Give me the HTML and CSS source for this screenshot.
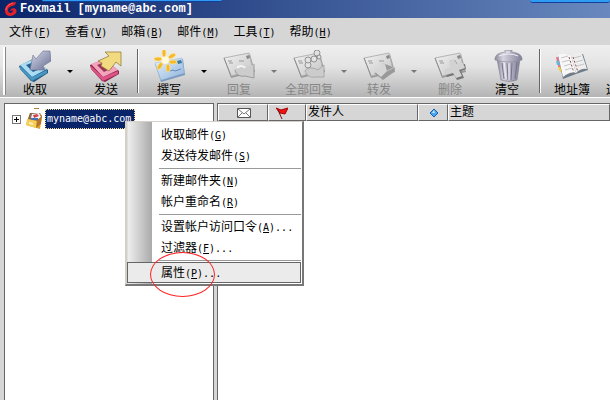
FILE: index.html
```html
<!DOCTYPE html>
<html lang="zh-CN">
<head>
    <meta charset="UTF-8">
    <meta name="viewport" content="width=device-width, initial-scale=1.0">
    <title>Foxmail</title>
    <link rel="stylesheet" href="styles.css">
</head>
<body>
    <!-- 图标定义 -->
    <svg class="defs" aria-hidden="true">
        <defs>
            <linearGradient id="silver" x1="0" y1="0" x2="1" y2="1">
                <stop offset="0" stop-color="#d8dcec"/><stop offset="1" stop-color="#676d91"/>
            </linearGradient>
            <linearGradient id="can" x1="0" y1="0" x2="1" y2="0">
                <stop offset="0" stop-color="#8c8a9c"/><stop offset=".3" stop-color="#d5d3df"/><stop offset="1" stop-color="#817f96"/>
            </linearGradient>
            <linearGradient id="paper" x1="0" y1="0" x2="1" y2="1">
                <stop offset="0" stop-color="#f2f2f2"/><stop offset="1" stop-color="#c4c4c4"/>
            </linearGradient>
            <linearGradient id="card" x1="0" y1="0" x2="1" y2="1">
                <stop offset="0" stop-color="#e8f4fc"/><stop offset="1" stop-color="#8fb2dc"/>
            </linearGradient>
            <symbol id="letter" viewBox="0 0 32 32">
                <path d="M2 9L27 4L32 22L8 28Z" fill="#999"/>
                <path d="M1 8L26 3L30 20L8 26Z" fill="url(#paper)" stroke="#b4b4b4"/>
                <path d="M1 8L8 26" stroke="#8e8e8e"/>
                <path d="M5 11h4M6 13h4M16 11h5" stroke="#999"/>
                <path d="M23 6l3-1l1 3l-3 1z" fill="#888"/>
            </symbol>
        </defs>
    </svg>

    <header class="titlebar">
        <svg class="logo" viewBox="0 0 14 16">
            <path d="M12 1C5 1 0 5 1 11C2 16 9 16 12 12C14 8 10 6 7 8L6 10L9 9C9 13 4 13 4 9C4 6 8 5 11 4Z" fill="#e3202a"/>
            <path d="M9 2C5 3 2 6 2 9" fill="none" stroke="#ff6660"/>
        </svg>
        <h1>Foxmail [myname@abc.com]</h1>
        <span class="tab tab-left"></span>
        <span class="tab tab-right"></span>
    </header>

    <nav class="menubar">
        <button>文件<span class="key">(<u>F</u>)</span></button>
        <button>查看<span class="key">(<u>V</u>)</span></button>
        <button>邮箱<span class="key">(<u>B</u>)</span></button>
        <button>邮件<span class="key">(<u>M</u>)</span></button>
        <button>工具<span class="key">(<u>T</u>)</span></button>
        <button>帮助<span class="key">(<u>H</u>)</span></button>
    </nav>

    <div class="toolbar">
        <span class="grip"></span>
        <button class="tool">
            <svg viewBox="0 0 32 32">
                <path d="M0 16L14 9L29 20L29 23L15 32L12 31L1 19Z" fill="#245780"/>
                <path d="M1 15L15 9L28 19L13 27Z" fill="#a7dcf4"/>
                <path d="M1 16L13 27L28 20L28 23L13 31L1 19Z" fill="#4795c1"/>
                <path d="M7 15L15 12L23 18L14 22Z" fill="#28618c"/>
                <path d="M31 1L32 11L24 16L26 20L11 20L14 5L17 9L24 1Z" fill="url(#silver)" stroke="#6b7090" stroke-width=".6"/>
            </svg>
            收取
        </button>
        <button class="drop" aria-label="收取选项"></button>
        <button class="tool wide">
            <svg viewBox="0 0 32 32">
                <path d="M0 15L14 9L29 21L29 24L15 32L12 31L1 19Z" fill="#8b2449"/>
                <path d="M1 14L14 9L28 20L13 27Z" fill="#f4a3bd"/>
                <path d="M1 16L13 27L28 21L28 24L13 31L1 19Z" fill="#dc5385"/>
                <path d="M7 15L15 12L22 18L14 22Z" fill="#9b3559"/>
                <path d="M15 2H31V16L26 12L19 21L11 16L12 13L8 11L19 6Z" fill="#f2da80" stroke="#8c7030" stroke-width=".7"/>
            </svg>
            发送
        </button>
        <span class="separator"></span>
        <button class="tool">
            <svg viewBox="0 0 32 32">
                <path d="M2 14L30 9L32 25L8 32Z" fill="#7898bf"/>
                <path d="M2 13L29 8L31 23L8 30Z" fill="url(#card)" stroke="#a3bddb" stroke-width=".6"/>
                <path d="M24 11l4-1l1 3l-4 1z" fill="#397b9d"/>
                <path d="M17 21l3-1l2 1l6-2" fill="none" stroke="#6488b5"/>
                <circle cx="12" cy="10" r="4" fill="#fff9de"/>
                <g fill="#f5b92e" stroke="#ffeaa0" stroke-width=".6">
                    <ellipse cx="11" cy="3" rx="2" ry="4"/>
                    <ellipse cx="19" cy="6" rx="2" ry="4" transform="rotate(60 19 6)"/>
                    <ellipse cx="5" cy="9" rx="4" ry="2"/>
                    <ellipse cx="20" cy="12" rx="4" ry="2"/>
                    <ellipse cx="7" cy="16" rx="2" ry="4" transform="rotate(35 7 16)"/>
                    <ellipse cx="15" cy="18" rx="2" ry="4"/>
                </g>
            </svg>
            撰写
        </button>
        <button class="drop" aria-label="撰写选项"></button>
        <button class="tool" disabled>
            <svg viewBox="0 0 32 32">
                <use href="#letter"/>
                <path d="M12 20C15 14 21 16 24 18L31 14V27L21 26C16 26 13 24 12 20Z" fill="#ccc"/>
                <path d="M12 20C13 25 17 27 22 26L31 28V14" fill="none" stroke="#999"/>
                <path d="M14 18C17 15 21 16 22 18" fill="none" stroke="#f4f4f4" stroke-width="2"/>
            </svg>
            回复
        </button>
        <button class="drop" aria-label="回复选项" disabled></button>
        <button class="tool" disabled>
            <svg viewBox="0 0 32 32">
                <use href="#letter"/>
                <path d="M12 21C15 16 21 18 25 20L31 15V27L23 27C17 28 14 26 12 21Z" fill="#ccc" stroke="#999" stroke-width=".7"/>
                <g fill="#e2e2e2" stroke="#808080" stroke-width=".8">
                    <circle cx="15" cy="15" r="3"/><circle cx="15" cy="10" r="3"/><circle cx="21" cy="9" r="3"/><circle cx="24" cy="3" r="3"/><circle cx="26" cy="7" r="2"/>
                </g>
            </svg>
            全部回复
        </button>
        <button class="drop" aria-label="全部回复选项" disabled></button>
        <button class="tool" disabled>
            <svg viewBox="0 0 32 32">
                <use href="#letter"/>
                <path d="M11 23L20 21L18 13L22 14L32 18L31 22L20 30Z" fill="#999"/>
                <path d="M11 21L19 19L17 12L22 14L24 21L18 27Z" fill="#d5d5d5"/>
                <path d="M24 21L32 17" stroke="#c4c4c4"/>
            </svg>
            转发
        </button>
        <button class="drop" aria-label="转发选项" disabled></button>
        <button class="tool wide" disabled>
            <svg viewBox="0 0 32 32">
                <use href="#letter"/>
                <path d="M16 12L21 10L24 15L31 14L32 19L27 21L30 28L23 30L20 25L13 27L11 21L18 18Z" fill="#777"/>
                <path d="M15 11L20 9L23 14L29 13L31 18L25 20L28 26L22 28L19 23L12 25L10 20L17 17Z" fill="#d2d2d2"/>
            </svg>
            删除
        </button>
        <button class="tool wider">
            <svg viewBox="0 0 32 32">
                <path d="M6 9H29L26 30Q18 33 10 30Z" fill="url(#can)" stroke="#7b798b" stroke-width=".6"/>
                <path d="M11 13L13 29M16 13L17 30M21 13L20 30M26 12L24 29" stroke="#757388"/>
                <path d="M13 12L15 29M18 13V30" stroke="#eceaf1"/>
                <path d="M4 8Q5 3 14 2V0H21V2Q30 3 31 8V10Q18 14 4 10Z" fill="url(#can)" stroke="#8a8899" stroke-width=".6"/>
                <path d="M8 6Q18 2 27 6M15 2H19" fill="none" stroke="#f1f0f5"/>
            </svg>
            清空
        </button>
        <span class="separator"></span>
        <button class="tool wide">
            <svg viewBox="0 0 32 32">
                <path d="M0 7h4v5H1zM2 13h3v4H2z" fill="#e4778f"/><path d="M2 17h4v5H4z" fill="#efcf45"/><path d="M0 11h4v4H1z" fill="#66b8d8"/>
                <path d="M2 6L16 6L27 4L32 20L20 24L7 29Z" fill="#6f7c89"/>
                <path d="M2 5Q9 2 15 6L20 23Q14 21 7 27Z" fill="#f7f7f7"/>
                <path d="M15 6Q19 2 26 4L31 19Q25 18 20 23Z" fill="#eee"/>
                <path d="M5 8l7-2M6 12l8-2M8 16l7-2M9 20l7-2M18 8l7-2M20 12l7-2M21 16l7-2" stroke="#c4c4c4"/>
                <path d="M13 7L18 23M17 7L22 22" stroke="#8b4f4f" stroke-dasharray="2 2"/>
            </svg>
            地址簿
        </button>
        <button class="tool remote">
            <svg viewBox="0 0 32 32"><path d="M2 6h26v20H2z" fill="#b6c9df"/></svg>
            远程管理
        </button>
    </div>

    <main class="workspace">
        <section class="tree">
            <div class="account">
                <button class="expand" aria-label="展开"></button>
                <svg class="mailbox" viewBox="0 0 18 22">
                    <path d="M8 0h5v1H8z" fill="#b5803b"/>
                    <path d="M4 5L16 7L14 21L0 17Z" fill="#dca333"/>
                    <path d="M4 5L14 5L16 9L11 13L2 11Z" fill="#87664b"/>
                    <path d="M6 6L13 5L15 9L11 12L5 10Z" fill="#f3f4fa"/>
                    <path d="M7 7L11 6L13 8L8 10Z" fill="#d14449"/><path d="M5 10h7v2H5z" fill="#4470b5"/>
                    <path d="M1 11L11 13L10 20L0 17Z" fill="#f5cd58"/><path d="M3 14l4 1v2l-4-1z" fill="#fff3bc"/>
                    <path d="M11 13L16 8L15 16L10 20Z" fill="#b87524"/>
                </svg>
                <span class="name">myname@abc.com</span>
            </div>
        </section>
        <section class="list">
            <table>
                <thead>
                    <tr>
                        <th class="col-mail"><svg class="icon-mail" viewBox="0 0 14 10"><path d="M.5.5h13v9H.5z" fill="#fff" stroke="#555"/><path d="M1 1l6 5l6-5M1 9l4-4M13 9L9 5" fill="none" stroke="#777"/></svg></th>
                        <th class="col-flag"><svg class="icon-flag" viewBox="0 0 12 12"><path d="M0 1L5 3L12 1L9 7L4 6Z" fill="#ed1515" stroke="#a00"/><path d="M2 3L6 12" stroke="#711"/></svg></th>
                        <th class="col-from">发件人</th>
                        <th class="col-mark"><svg class="icon-mark" viewBox="0 0 10 10"><path d="M5 1L9 5L5 9L1 5Z" fill="#4aa6ee" stroke="#1c5eac"/><path d="M5 2L3 5h3z" fill="#b9e4ff"/></svg></th>
                        <th>主题</th>
                    </tr>
                </thead>
            </table>
        </section>

        <div class="context-menu" role="menu">
            <button role="menuitem">收取邮件<span class="key">(<u>G</u>)</span></button>
            <button role="menuitem">发送待发邮件<span class="key">(<u>S</u>)</span></button>
            <hr>
            <button role="menuitem">新建邮件夹<span class="key">(<u>N</u>)</span></button>
            <button role="menuitem">帐户重命名<span class="key">(<u>R</u>)</span></button>
            <hr>
            <button role="menuitem">设置帐户访问口令<span class="key">(<u>A</u>)...</span></button>
            <button role="menuitem">过滤器<span class="key">(<u>F</u>)...</span></button>
            <hr>
            <button role="menuitem" class="active">属性<span class="key">(<u>P</u>)...</span></button>
            <span class="ring"></span>
        </div>
    </main>
</body>
</html>
```
FILE: styles.css
```css
* {
    margin: 0;
    padding: 0;
    box-sizing: border-box;
}

body {
    display: flex;
    flex-direction: column;
    height: 100vh;
    overflow: hidden;
    background: #d6d6d6;
    color: #000;
    font: 12px/16px "Liberation Sans", "Noto Sans CJK SC", sans-serif;
}

button {
    border: 0;
    background: none;
    color: inherit;
    font: inherit;
    white-space: nowrap;
}

svg {
    display: block;
    flex: none;
}

.defs {
    position: absolute;
    width: 0;
    height: 0;
}

.key {
    font-family: "DejaVu Sans Mono", monospace;
    font-size: 10px;
}

/* 标题栏 */
.titlebar {
    position: relative;
    display: flex;
    flex: none;
    align-items: center;
    gap: 2px;
    height: 18px;
    padding-left: 4px;
    background: linear-gradient(90deg, #0a246a, #6888bf);
    color: #fff;
}

.titlebar h1 {
    font: bold 12px/18px "Liberation Mono", monospace;
}

.logo {
    width: 14px;
    height: 16px;
}

.tab {
    position: absolute;
    top: 0;
    height: 2px;
    background: #2f9cf4;
    border-bottom: 1px solid #143e9a;
    border-radius: 0 0 3px 3px;
}

.tab-left {
    left: 42px;
    width: 180px;
}

.tab-right {
    right: 0;
    width: 80px;
    height: 3px;
}

/* 菜单栏 */
.menubar {
    display: flex;
    flex: none;
    height: 27px;
    padding-left: 2px;
}

.menubar button {
    padding: 2px 7px 0;
}

/* 工具栏 */
.toolbar {
    display: flex;
    flex: none;
    height: 53px;
    overflow: hidden;
    border-bottom: 1px solid #fff;
    background: linear-gradient(#eee, #e4e4e4 40%, #b4b4b4);
}

.grip {
    flex: none;
    width: 3px;
    margin: 2px 2px 2px 3px;
    border-left: 2px solid #fff;
    border-right: 1px solid #888;
}

.tool {
    display: flex;
    flex: none;
    flex-direction: column;
    align-items: center;
    width: 54px;
    padding-top: 5px;
}

.tool svg {
    width: 32px;
    height: 32px;
}

.tool.wide {
    width: 56px;
}

.tool.wider {
    width: 58px;
}

.tool.remote {
    width: 60px;
}

.tool:disabled {
    color: #868686;
}

.drop {
    display: flex;
    flex: none;
    align-items: center;
    justify-content: center;
    width: 16px;
}

.drop::before {
    content: "";
    border: 3px solid transparent;
    border-top-color: #000;
    border-bottom: 0;
}

.drop:disabled::before {
    border-top-color: #777;
}

.separator {
    flex: none;
    width: 2px;
    margin: 4px 3px;
    border-left: 1px solid #666;
    border-right: 1px solid #fff;
}

/* 主区域 */
.workspace {
    position: relative;
    display: flex;
    flex: 1;
    gap: 3px;
    padding: 5px 0 0 4px;
}

.tree {
    flex: none;
    width: 210px;
    border: 1px solid #666;
    border-bottom: 0;
    background: #fff;
}

.account {
    display: flex;
    align-items: center;
    padding: 4px 0 0 7px;
}

.expand {
    width: 9px;
    height: 9px;
    border: 1px solid #777;
    background: linear-gradient(#000, #000) center / 5px 1px no-repeat, linear-gradient(#000, #000) center / 1px 5px no-repeat;
}

.mailbox {
    width: 18px;
    height: 22px;
    margin: 0 1px 0 5px;
}

.name {
    height: 20px;
    padding: 0 3px 0 1px;
    border: 1px dotted #f5db95;
    background: #0a246a;
    color: #fff;
    font: 10px/18px "DejaVu Sans Mono", monospace;
}

.list {
    flex: 1;
    border-top: 1px solid #666;
    border-left: 1px solid #666;
    background: #fff;
}

.list table {
    width: 100%;
    table-layout: fixed;
    border-collapse: separate;
    border-spacing: 0;
}

.list th {
    height: 17px;
    padding-left: 1px;
    border: 1px solid #666;
    border-top-color: #fff;
    border-left-color: #fff;
    background: #d6d6d6;
    font-weight: normal;
    line-height: 15px;
    text-align: left;
}

.list th svg {
    margin: 0 auto;
}

.col-mail {
    width: 50px;
}

.col-flag {
    width: 38px;
}

.col-from {
    width: 112px;
}

.col-mark {
    width: 30px;
}

.icon-mail {
    width: 14px;
    height: 10px;
}

.list .icon-flag {
    width: 12px;
    height: 12px;
    margin-left: 6px;
}

.icon-mark {
    width: 10px;
    height: 10px;
}

/* 右键菜单 */
.context-menu {
    position: absolute;
    top: 23px;
    left: 125px;
    display: flex;
    flex-direction: column;
    width: 179px;
    padding: 2px 1px 1px;
    border: 1px solid #d4d0c8;
    border-right: 2px solid #777;
    border-bottom: 2px solid #777;
    background: linear-gradient(90deg, #d4d0c8 1px, #eee 2px, #aaa 26px, #fff 26px);
}

.context-menu button {
    height: 21px;
    padding: 2px 0 0 34px;
    text-align: left;
}

.context-menu hr {
    margin: 2px 0 1px 32px;
    border: 0;
    border-top: 1px solid #999;
}

.context-menu .active {
    padding-left: 33px;
    border: 1px solid #666;
    background: #ebebeb;
}

.ring {
    position: absolute;
    bottom: -13px;
    left: 24px;
    width: 65px;
    height: 45px;
    border: 1px solid #f22;
    border-radius: 50%;
}
```
